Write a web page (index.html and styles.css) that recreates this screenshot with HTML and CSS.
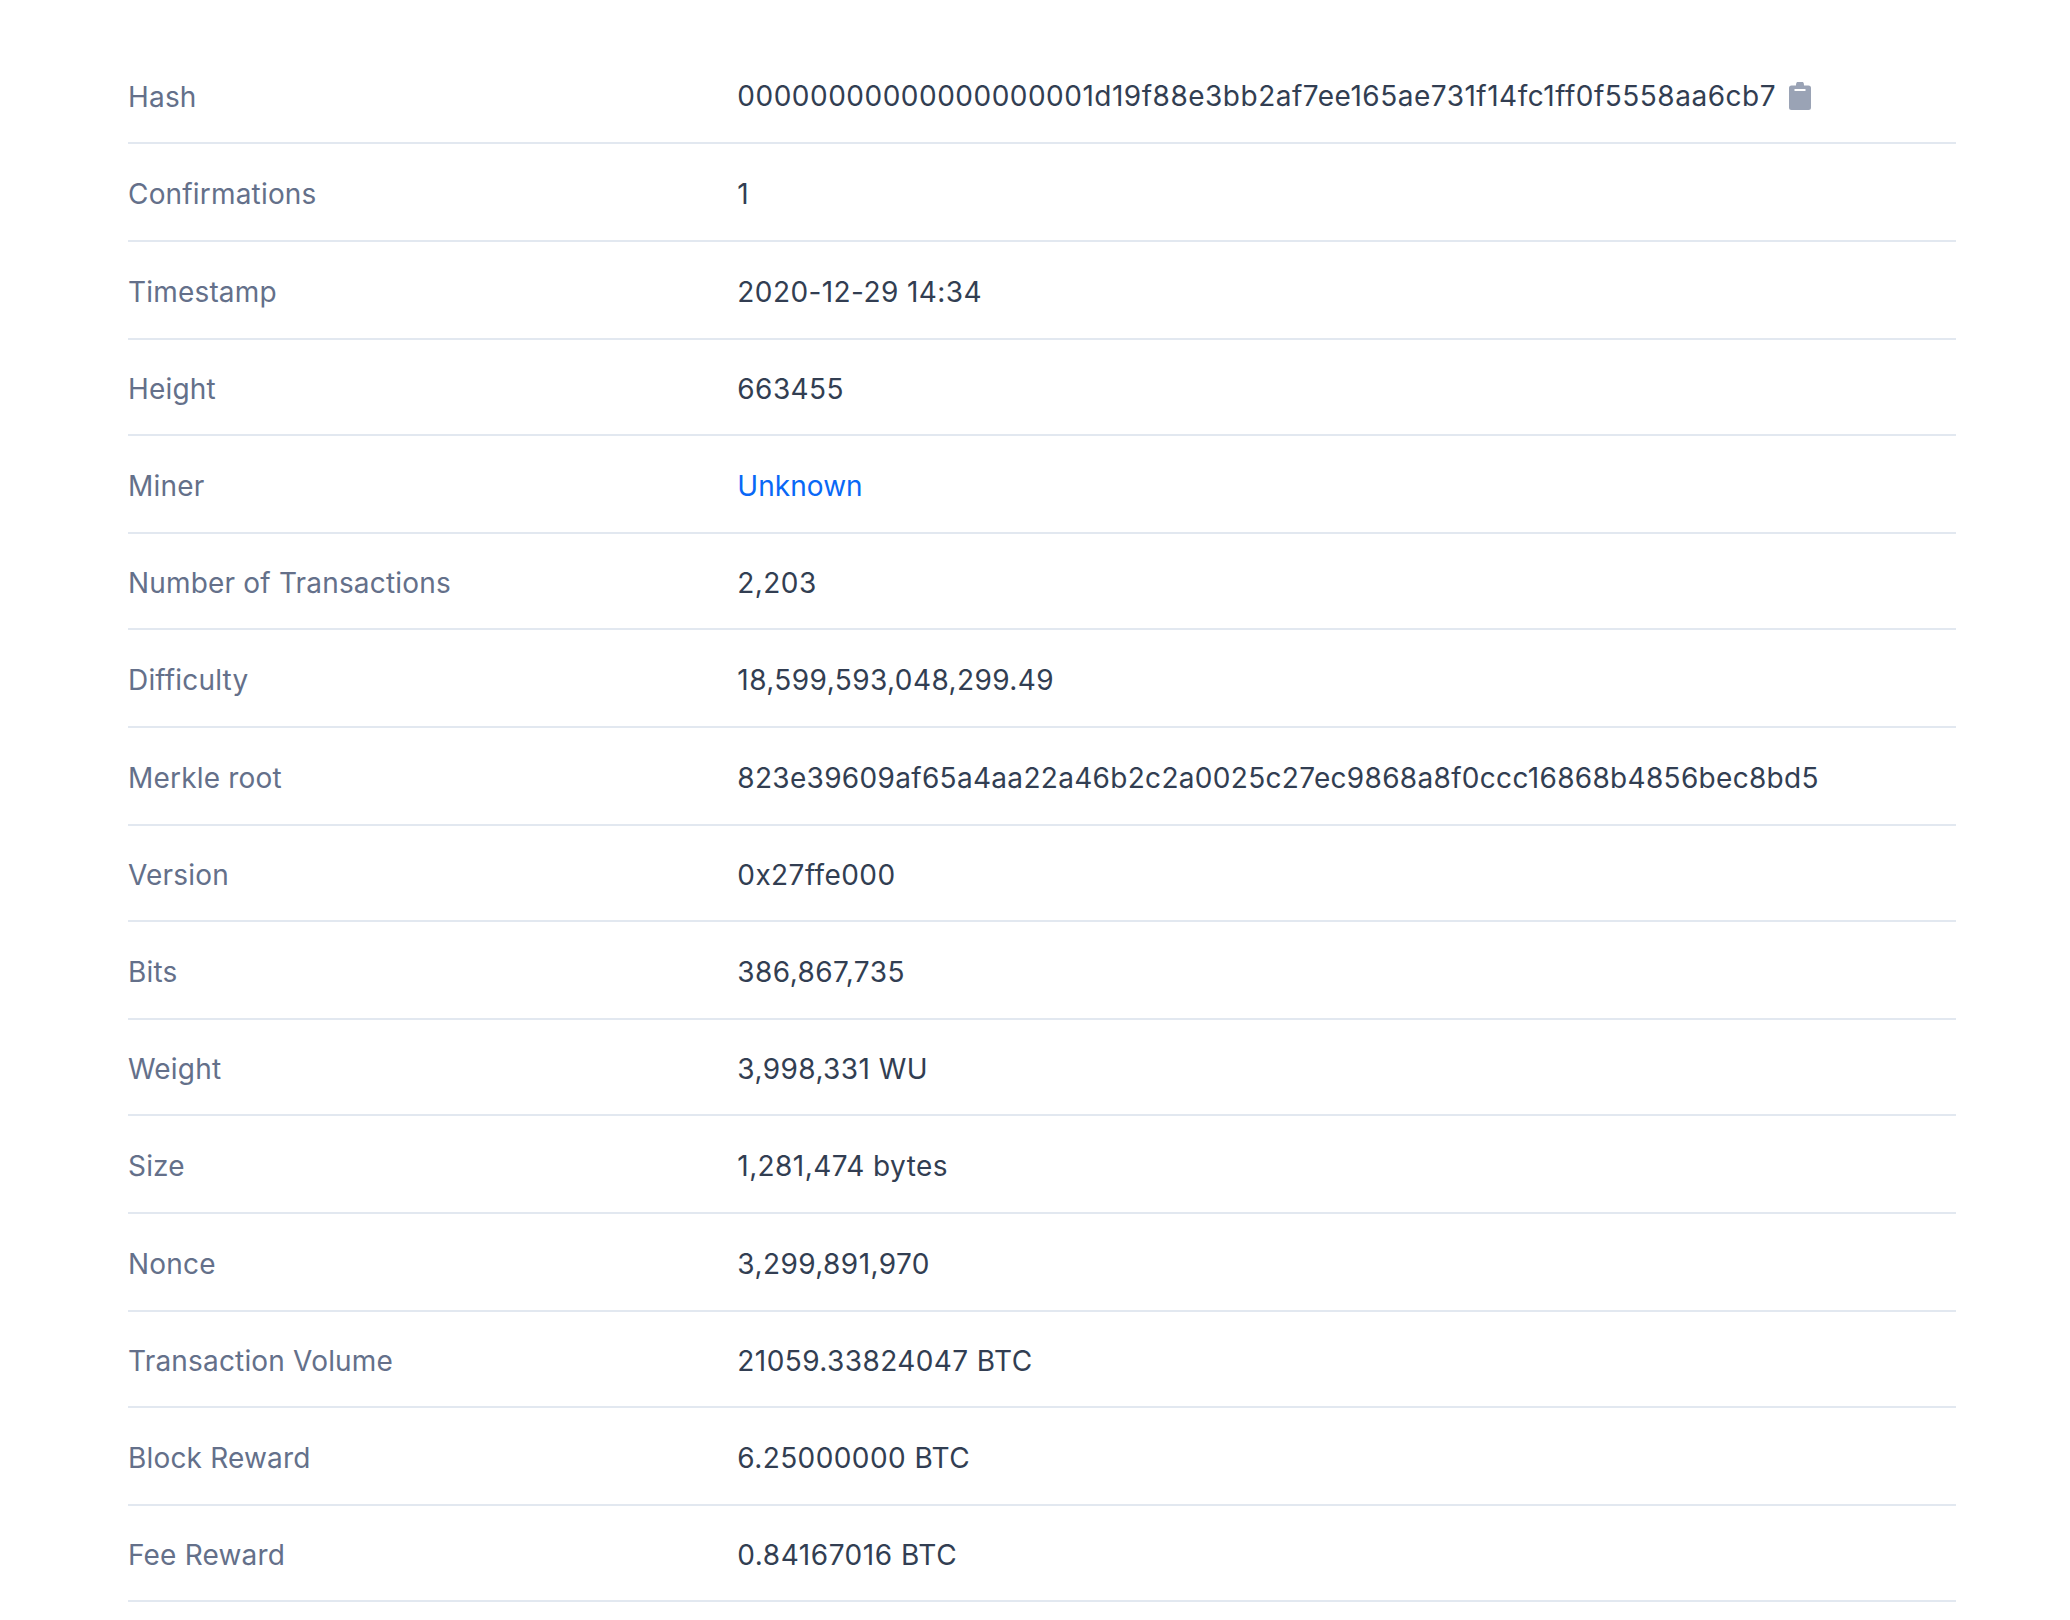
FILE: index.html
```html
<!DOCTYPE html>
<html lang="en">
<head>
<meta charset="utf-8">
<title>Block details</title>
<link rel="stylesheet" href="styles.css">
</head>
<body>
<dl class="details">
  <div class="row"><dt class="label">Hash</dt><dd class="value value-hash"><span>00000000000000000001d19f88e3bb2af7ee165ae731f14fc1ff0f5558aa6cb7</span><svg class="copy" viewBox="0 0 22 28" width="22" height="28"><path fill="#9aa3b5" d="M7 3.500V3a4 4 0 0 1 8 0v.500h4.500A2.500 2.500 0 0 1 22 6v19.500a2.500 2.500 0 0 1-2.500 2.500h-17A2.500 2.500 0 0 1 0 25.500V6a2.500 2.500 0 0 1 2.500-2.500H7Z"/><path fill="#fff" d="M5.500 7h11v2h-11z"/></svg></dd></div>
  <div class="row"><dt class="label">Confirmations</dt><dd class="value">1</dd></div>
  <div class="row"><dt class="label">Timestamp</dt><dd class="value">2020-12-29 14:34</dd></div>
  <div class="row"><dt class="label">Height</dt><dd class="value">663455</dd></div>
  <div class="row"><dt class="label">Miner</dt><dd class="value value-plain"><a class="link" href="#">Unknown</a></dd></div>
  <div class="row"><dt class="label">Number of Transactions</dt><dd class="value">2,203</dd></div>
  <div class="row"><dt class="label">Difficulty</dt><dd class="value">18,599,593,048,299.49</dd></div>
  <div class="row"><dt class="label">Merkle root</dt><dd class="value value-hex">823e39609af65a4aa22a46b2c2a0025c27ec9868a8f0ccc16868b4856bec8bd5</dd></div>
  <div class="row"><dt class="label">Version</dt><dd class="value">0x27ffe000</dd></div>
  <div class="row"><dt class="label">Bits</dt><dd class="value">386,867,735</dd></div>
  <div class="row"><dt class="label">Weight</dt><dd class="value">3,998,331 WU</dd></div>
  <div class="row"><dt class="label">Size</dt><dd class="value">1,281,474 bytes</dd></div>
  <div class="row"><dt class="label">Nonce</dt><dd class="value">3,299,891,970</dd></div>
  <div class="row"><dt class="label">Transaction Volume</dt><dd class="value">21059.33824047 BTC</dd></div>
  <div class="row"><dt class="label">Block Reward</dt><dd class="value">6.25000000 BTC</dd></div>
  <div class="row"><dt class="label">Fee Reward</dt><dd class="value value-wide">0.84167016 BTC</dd></div>
</dl>
</body>
</html>
```

FILE: styles.css
```css
html, body {
  margin: 0;
  background: #fff;
}
body {
  font-family: Inter, "Liberation Sans", sans-serif;
  font-size: 28px;
  line-height: 42px;
}
.details {
  margin: 0;
  padding: 48px 114px 0 128px;
}
.row {
  display: grid;
  grid-template-columns: 1fr 2fr;
  align-items: center;
  box-sizing: border-box;
  height: 98px;
  padding-top: 4px;
  border-bottom: 2px solid #e2e8f0;
}
.row:nth-child(5n+1),
.row:nth-child(5n+4) {
  height: 96px;
}
.label {
  color: #64708a;
  letter-spacing: 0.18px;
}
.value {
  margin: 0;
  color: #323e52;
  letter-spacing: 0.42px;
}
.value-plain {
  letter-spacing: 0.05px;
}
.value-hex {
  letter-spacing: 0.31px;
}
.value-wide {
  letter-spacing: 0.55px;
}
.value-hash {
  display: flex;
  align-items: center;
  gap: 13px;
  margin-bottom: 2px;
  letter-spacing: 0.5px;
}
.copy {
  flex: none;
}
.link {
  color: #0968f6;
  text-decoration: none;
}
```
